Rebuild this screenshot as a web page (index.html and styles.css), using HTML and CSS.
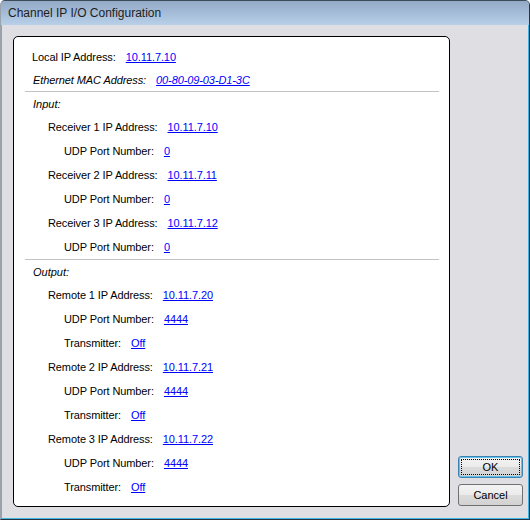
FILE: index.html
```html
<!DOCTYPE html>
<html lang="en">
<head>
  <meta charset="UTF-8">
  <title>Channel IP I/O Configuration</title>
  <link rel="stylesheet" href="styles.css">
</head>
<body>
  <div class="window">
    <div class="titlebar">Channel IP I/O Configuration</div>
    <div class="client">
      <div class="panel">
        <div class="head">
          <div class="row"><span class="label">Local IP Address:</span><a href="#">10.11.7.10</a></div>
          <div class="row italic"><span class="label">Ethernet MAC Address:</span><a href="#">00-80-09-03-D1-3C</a></div>
        </div>
        <div class="group">
          <div class="caption">Input:</div>
          <div class="row lv1"><span class="label">Receiver 1 IP Address:</span><a href="#">10.11.7.10</a></div>
          <div class="row lv2"><span class="label">UDP Port Number:</span><a href="#">0</a></div>
          <div class="row lv1"><span class="label">Receiver 2 IP Address:</span><a href="#">10.11.7.11</a></div>
          <div class="row lv2"><span class="label">UDP Port Number:</span><a href="#">0</a></div>
          <div class="row lv1"><span class="label">Receiver 3 IP Address:</span><a href="#">10.11.7.12</a></div>
          <div class="row lv2"><span class="label">UDP Port Number:</span><a href="#">0</a></div>
        </div>
        <div class="group">
          <div class="caption">Output:</div>
          <div class="row lv1"><span class="label">Remote 1 IP Address:</span><a href="#">10.11.7.20</a></div>
          <div class="row lv2"><span class="label">UDP Port Number:</span><a href="#">4444</a></div>
          <div class="row lv2"><span class="label">Transmitter:</span><a href="#">Off</a></div>
          <div class="row lv1"><span class="label">Remote 2 IP Address:</span><a href="#">10.11.7.21</a></div>
          <div class="row lv2"><span class="label">UDP Port Number:</span><a href="#">4444</a></div>
          <div class="row lv2"><span class="label">Transmitter:</span><a href="#">Off</a></div>
          <div class="row lv1"><span class="label">Remote 3 IP Address:</span><a href="#">10.11.7.22</a></div>
          <div class="row lv2"><span class="label">UDP Port Number:</span><a href="#">4444</a></div>
          <div class="row lv2"><span class="label">Transmitter:</span><a href="#">Off</a></div>
        </div>
      </div>
      <div class="buttons">
        <button class="btn default">OK</button>
        <button class="btn">Cancel</button>
      </div>
    </div>
  </div>
</body>
</html>
```
FILE: styles.css
```css
html, body {
  margin: 0;
  padding: 0;
}
body {
  font-family: "Liberation Sans", "DejaVu Sans", sans-serif;
  font-size: 11px;
  color: #000;
}
.window {
  box-sizing: border-box;
  width: 530px;
  height: 520px;
  background-color: #dfdee3;
  border-top: 1px solid #3c4a5a;
  border-right: 1px solid #2a3440;
  border-bottom: 1px solid #2a3440;
  border-left: 1px solid #9aa2ac;
  box-shadow: inset -1px 0 0 #3fb5e6, inset 0 -1px 0 #3fb5e6, inset 1px 0 0 #5fb4dc;
  border-radius: 5px 5px 0 0;
  overflow: hidden;
}
.titlebar {
  height: 24px;
  line-height: 25px;
  padding-left: 7px;
  font-size: 12px;
  color: #1e1e1e;
  background: linear-gradient(to bottom, #93aac7, #b8cfe9);
}
.client {
  display: flex;
  padding: 11px 6px 0 12px;
}
.panel {
  box-sizing: border-box;
  width: 437px;
  height: 471px;
  background-color: #fff;
  border: 1px solid #000;
  border-radius: 5px;
  padding-top: 9px;
}
.row {
  display: flex;
  align-items: center;
  height: 24px;
  padding-left: 18px;
  letter-spacing: -0.1px;
}
.head .row {
  height: 23px;
}
.head .row:first-child {
  height: 22px;
}
.label {
  margin-right: 10px;
}
.italic {
  font-style: italic;
  padding-left: 19px;
}
.group {
  border-top: 1px solid #c3c3c3;
  margin: 0 10px 0 11px;
}
.group .row {
  margin-left: -11px;
}
.caption {
  font-style: italic;
  height: 23px;
  line-height: 24px;
  padding-left: 8px;
}
.row.lv1 {
  padding-left: 34px;
}
.row.lv2 {
  padding-left: 50px;
}
a {
  color: #0000ff;
  text-decoration: underline;
}
.buttons {
  display: flex;
  flex-direction: column;
  justify-content: flex-end;
  gap: 6px;
  margin-left: 8px;
  padding-bottom: 1px;
}
.btn {
  box-sizing: border-box;
  width: 65px;
  height: 22px;
  font-family: "Liberation Sans", "DejaVu Sans", sans-serif;
  font-size: 11px;
  color: #000;
  border: 1px solid #707070;
  border-radius: 3px;
  background: linear-gradient(to bottom, #f3f3f3 0%, #ebebeb 50%, #dcdcdc 51%, #d2d2d2 100%);
  padding: 0;
}
.btn.default {
  border-color: #3c7fb1;
  box-shadow: inset 0 0 0 1px #61c4ec;
  outline: 1px dotted #000;
  outline-offset: -4px;
}
```
